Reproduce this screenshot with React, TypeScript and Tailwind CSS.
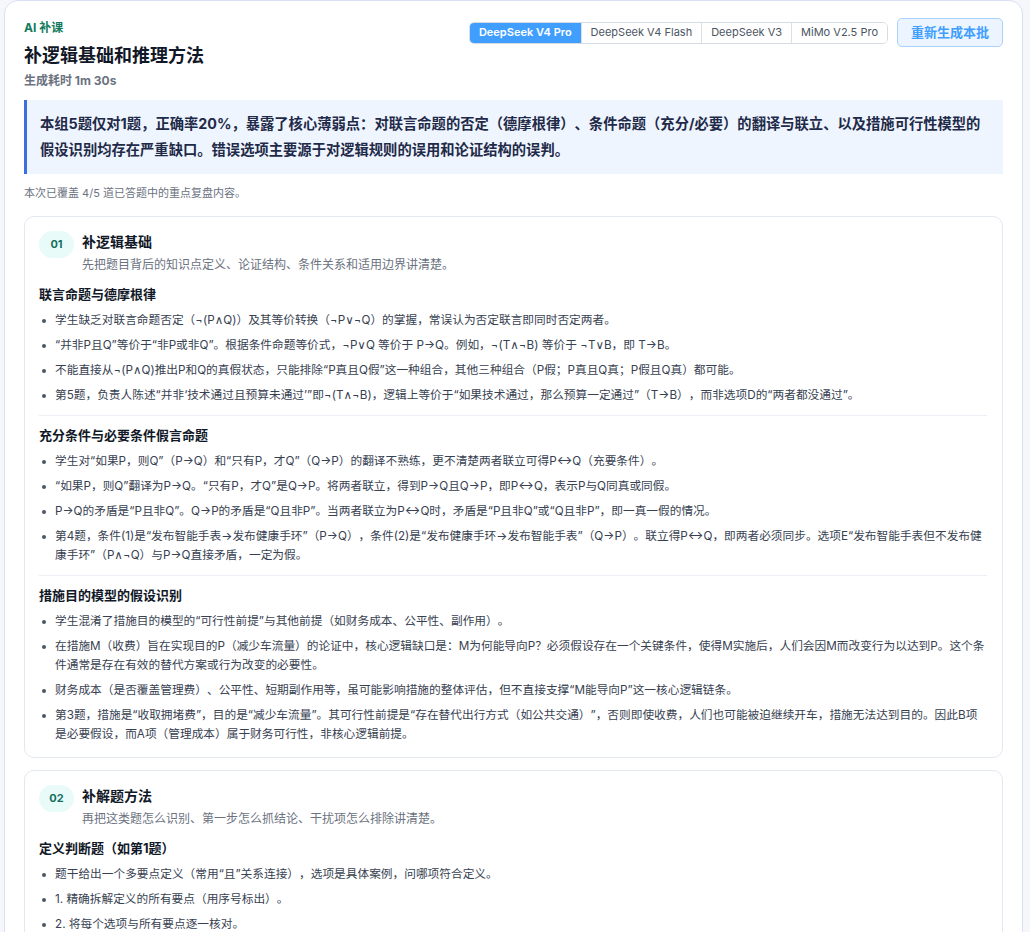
interface LessonSection {
  title: string
  points: string[]
}

interface Lesson {
  no: string
  title: string
  desc: string
  sections: LessonSection[]
}

const MODELS = ['DeepSeek V4 Pro', 'DeepSeek V4 Flash', 'DeepSeek V3', 'MiMo V2.5 Pro']

const LESSONS: Lesson[] = [
  {
    no: '01',
    title: '补逻辑基础',
    desc: '先把题目背后的知识点定义、论证结构、条件关系和适用边界讲清楚。',
    sections: [
      {
        title: '联言命题与德摩根律',
        points: [
          '学生缺乏对联言命题否定（¬(P∧Q)）及其等价转换（¬P∨¬Q）的掌握，常误认为否定联言即同时否定两者。',
          '“并非P且Q”等价于“非P或非Q”。根据条件命题等价式，¬P∨Q 等价于 P→Q。例如，¬(T∧¬B) 等价于 ¬T∨B，即 T→B。',
          '不能直接从¬(P∧Q)推出P和Q的真假状态，只能排除“P真且Q假”这一种组合，其他三种组合（P假；P真且Q真；P假且Q真）都可能。',
          '第5题，负责人陈述“并非‘技术通过且预算未通过’”即¬(T∧¬B)，逻辑上等价于“如果技术通过，那么预算一定通过”（T→B），而非选项D的“两者都没通过”。'
        ]
      },
      {
        title: '充分条件与必要条件假言命题',
        points: [
          '学生对“如果P，则Q”（P→Q）和“只有P，才Q”（Q→P）的翻译不熟练，更不清楚两者联立可得P↔Q（充要条件）。',
          '“如果P，则Q”翻译为P→Q。“只有P，才Q”是Q→P。将两者联立，得到P→Q且Q→P，即P↔Q，表示P与Q同真或同假。',
          'P→Q的矛盾是“P且非Q”。Q→P的矛盾是“Q且非P”。当两者联立为P↔Q时，矛盾是“P且非Q”或“Q且非P”，即一真一假的情况。',
          '第4题，条件(1)是“发布智能手表→发布健康手环”（P→Q），条件(2)是“发布健康手环→发布智能手表”（Q→P）。联立得P↔Q，即两者必须同步。选项E“发布智能手表但不发布健康手环”（P∧¬Q）与P→Q直接矛盾，一定为假。'
        ]
      },
      {
        title: '措施目的模型的假设识别',
        points: [
          '学生混淆了措施目的模型的“可行性前提”与其他前提（如财务成本、公平性、副作用）。',
          '在措施M（收费）旨在实现目的P（减少车流量）的论证中，核心逻辑缺口是：M为何能导向P？必须假设存在一个关键条件，使得M实施后，人们会因M而改变行为以达到P。这个条件通常是存在有效的替代方案或行为改变的必要性。',
          '财务成本（是否覆盖管理费）、公平性、短期副作用等，虽可能影响措施的整体评估，但不直接支撑“M能导向P”这一核心逻辑链条。',
          '第3题，措施是“收取拥堵费”，目的是“减少车流量”。其可行性前提是“存在替代出行方式（如公共交通）”，否则即使收费，人们也可能被迫继续开车，措施无法达到目的。因此B项是必要假设，而A项（管理成本）属于财务可行性，非核心逻辑前提。'
        ]
      }
    ]
  },
  {
    no: '02',
    title: '补解题方法',
    desc: '再把这类题怎么识别、第一步怎么抓结论、干扰项怎么排除讲清楚。',
    sections: [
      {
        title: '定义判断题（如第1题）',
        points: [
          '题干给出一个多要点定义（常用“且”关系连接），选项是具体案例，问哪项符合定义。',
          '1. 精确拆解定义的所有要点（用序号标出）。',
          '2. 将每个选项与所有要点逐一核对。',
          '3. 只要有一个要点不符合，即可排除该选项。'
        ]
      }
    ]
  }
]

function LessonCard({ lesson }: { lesson: Lesson }) {
  return (
    <div className="rounded-[10px] border border-[#e3e8f1] bg-white pt-[14px] pb-[13px] pl-[14px] pr-[15px]">
      <div className="flex items-start gap-[8px]">
        <div className="flex h-[27px] w-[35px] shrink-0 items-center justify-center rounded-full bg-[#e8fbf8] text-[11px] font-bold text-[#12705f]">
          {lesson.no}
        </div>
        <div className="pt-[1px]">
          <h2 className="text-[14px] font-bold leading-[20px] text-[#111827]">{lesson.title}</h2>
          <p className="mt-[4px] text-[12px] leading-[18px] text-[#6b7280]">{lesson.desc}</p>
        </div>
      </div>

      {lesson.sections.map((s, i) => (
        <div
          key={s.title}
          className={i === 0 ? 'pt-[10px] pb-[10px]' : 'border-t border-[#eceff5] pt-[9px] pb-[10px] last:pb-0'}
        >
          <h3 className="text-[13px] font-bold leading-[20px] text-[#111827]">{s.title}</h3>
          <ul className="mt-[7px] flex flex-col gap-[6px]">
            {s.points.map((p) => (
              <li key={p} className="flex text-[11.7px] leading-[19px] text-[#374151]">
                <span className="block w-[16px] shrink-0 pt-[8px] pl-[3px]">
                  <span className="block h-[4px] w-[4px] rounded-full bg-[#4b5563]" />
                </span>
                <span className="min-w-0 flex-1">{p}</span>
              </li>
            ))}
          </ul>
        </div>
      ))}
    </div>
  )
}

export default function App() {
  return (
    <div
      className="min-h-screen bg-[#f6f7fb] pl-[4px] pr-[7px] [text-spacing-trim:space-all]"
      style={{ fontFamily: 'Inter, "DejaVu Sans", "Noto Sans CJK SC", sans-serif' }}
    >
      <div className="rounded-[14px] border border-[#d9e0f5] bg-white px-[19px] pt-[17px] pb-6">
        {/* 标题 + 模型切换 */}
        <div className="flex items-start justify-between">
          <div>
            <p className="text-[12px] font-bold leading-[20px] text-[#137a5e]">AI 补课</p>
            <h1 className="mt-[5px] text-[18px] font-bold leading-[26px] text-[#111827]">补逻辑基础和推理方法</h1>
            <p className="mt-[4px] text-[12px] font-bold leading-[16px] text-[#6b7280]">生成耗时 1m 30s</p>
          </div>
          <div className="flex items-center gap-[9px]">
            <div className="flex h-[22px] overflow-hidden rounded-[5px] border border-[#d7dbe3]">
              {MODELS.map((m, i) => (
                <button
                  key={m}
                  className={
                    i === 0
                      ? 'bg-[#409eff] px-[9px] text-[11px] font-semibold text-white'
                      : 'border-l border-[#dcdfe6] bg-white px-[9px] text-[11px] text-[#4b5563]'
                  }
                >
                  {m}
                </button>
              ))}
            </div>
            <button className="h-[29px] rounded-[5px] border border-[#a9d1ff] bg-[#ecf5ff] px-[13px] text-[13px] font-semibold text-[#409eff]">
              重新生成本批
            </button>
          </div>
        </div>

        {/* 总结 */}
        <div className="mt-[11px] border-l-[3px] border-[#3b6fe0] bg-[#eef5ff] py-[11px] pl-[13px] pr-4">
          <p className="text-[14.3px] font-bold leading-[26px] text-[#1f2a48]">
            本组5题仅对1题，正确率20%，暴露了核心薄弱点：对联言命题的否定（德摩根律）、条件命题（充分/必要）的翻译与联立、以及措施可行性模型的假设识别均存在严重缺口。错误选项主要源于对逻辑规则的误用和论证结构的误判。
          </p>
        </div>

        <p className="mt-[11px] text-[11px] leading-[16px] text-[#6b7280]">本次已覆盖 4/5 道已答题中的重点复盘内容。</p>

        <div className="mt-[15px] flex flex-col gap-[12px]">
          {LESSONS.map((l) => (
            <LessonCard key={l.no} lesson={l} />
          ))}
        </div>
      </div>
    </div>
  )
}
